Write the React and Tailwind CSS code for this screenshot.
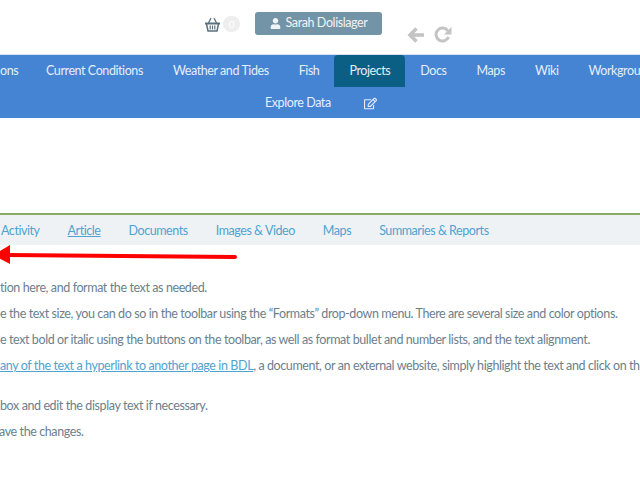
import React from "react";
import { FaUser, FaRegEdit } from "react-icons/fa";

const Nav = ({ children, active, className = "" }) => (
  <a className={`flex h-8 shrink-0 items-center whitespace-nowrap rounded-t-sm px-[15px] tracking-[-0.42px] text-[#e6eef9] ${active ? "bg-[#0b5f85]" : ""} ${className}`}>
    {children}
  </a>
);
const Tab = ({ children, active }) => (
  <a className={`whitespace-nowrap tracking-[-0.44px] text-[#4fa3d1] ${active ? "underline" : ""}`}>{children}</a>
);
const P = ({ children, className = "" }) => (
  <p className={`whitespace-nowrap leading-[26px] ${className}`}>{children}</p>
);

export default function App() {
  return (
    <div className="relative h-[480px] w-[640px] overflow-hidden bg-white text-[12.5px] tracking-[-0.4px] [font-family:Lato,sans-serif]">
      <header className="flex h-[54px] items-start">
        <div className="ml-[205px] mt-[16px] flex items-center">
          <svg width="15" height="15" viewBox="0 0 15 15" fill="none" stroke="#5b6f7d">
            <path d="M0 6.5 H15" strokeWidth="2" />
            <path d="M1.5 7 L3 14 H12 L13.5 7" strokeWidth="1.5" />
            <path d="M3.5 6 L6 1 M11.5 6 L9 1" strokeWidth="1.3" />
            <path d="M5.2 8.5 V12.5 M7.5 8.5 V12.5 M9.8 8.5 V12.5" strokeWidth="1.2" />
          </svg>
          <span className="ml-[3px] flex h-[16px] w-[17px] items-center justify-center rounded-full bg-[#eeeeee] text-[10px] text-white">0</span>
        </div>
        <button className="ml-[15px] mt-[12px] flex h-[23px] w-[127px] items-center justify-center gap-[5px] rounded-[3px] bg-[#7393a7] text-[#f0f4f6]">
          <FaUser className="text-[11px]" />
          Sarah Dolislager
        </button>
        <svg className="ml-[25px] mt-[27px]" width="17" height="16" viewBox="0 0 17 16" fill="none" stroke="#c4c4c4" strokeWidth="3.6">
          <path d="M17 8 H3" />
          <path d="M9.5 1.5 L3 8 L9.5 14.5" />
        </svg>
        <svg className="ml-[10px] mt-[26px]" width="18" height="17" viewBox="0 0 18 17" fill="none">
          <path d="M14 5 A6.5 6.5 0 1 0 14.6 11" stroke="#c4c4c4" strokeWidth="3" />
          <path d="M17.5 1 V8.5 H10 Z" fill="#c4c4c4" />
        </svg>
      </header>
      <nav className="border-t border-t-[#d6e2f2] bg-[#4583d3]">
        <div className="flex h-8 items-center">
          <span className="flex h-8 w-[31px] shrink-0 items-center text-[#e6eef9]">ons</span>
          <Nav>Current Conditions</Nav>
          <Nav>Weather and Tides</Nav>
          <Nav>Fish</Nav>
          <Nav active>Projects</Nav>
          <Nav>Docs</Nav>
          <Nav>Maps</Nav>
          <Nav>Wiki</Nav>
          <Nav>Workgroups</Nav>
        </div>
        <div className="flex h-[31px] items-center pl-[250px] pt-px">
          <Nav>Explore Data</Nav>
          <Nav className="ml-[3px]"><FaRegEdit className="text-[13px]" /></Nav>
        </div>
      </nav>
      <div className="mt-[95px] h-[2px] bg-[#85ad64]" />
      <div className="flex h-[30px] items-center gap-[28px] bg-[#eef2f5] pl-px pt-[2px]">
        <Tab>Activity</Tab>
        <Tab active>Article</Tab>
        <Tab>Documents</Tab>
        <Tab>Images &amp; Video</Tab>
        <Tab>Maps</Tab>
        <Tab>Summaries &amp; Reports</Tab>
      </div>
      <div className="mt-[30px] text-[#6b7f8e]">
        <P>tion here, and format the text as needed.</P>
        <P>e the text size, you can do so in the toolbar using the “Formats” drop-down menu. There are several size and color options.</P>
        <P>e text bold or italic using the buttons on the toolbar, as well as format bullet and number lists, and the text alignment.</P>
        <P><a className="text-[#4fa3d1] underline">any of the text a hyperlink to another page in BDL</a>, a document, or an external website, simply highlight the text and click on the</P>
        <P className="mt-[14px]">box and edit the display text if necessary.</P>
        <P className="-ml-px">ave the changes.</P>
      </div>
      <svg className="absolute left-0 top-[245px]" width="240" height="20" viewBox="0 0 240 20">
        <path d="M235 12 L8 10" stroke="#fe0000" strokeWidth="4" strokeLinecap="round" fill="none" />
        <path d="M10 0 L10 19 L-7 10 Z" fill="#fe0000" />
      </svg>
    </div>
  );
}
